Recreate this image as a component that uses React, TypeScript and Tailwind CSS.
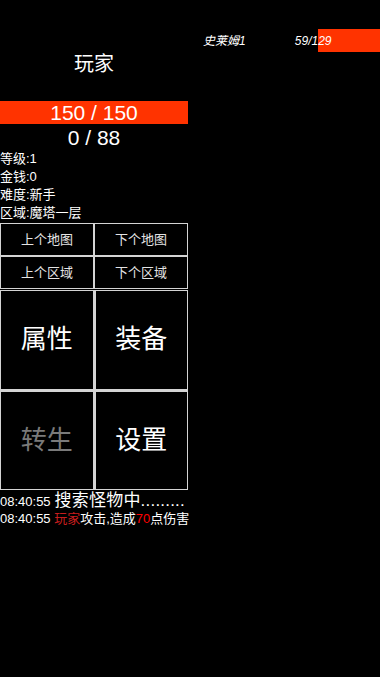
import React from 'react';

const FONT = { fontFamily: '"Liberation Sans", "Noto Sans CJK SC", sans-serif' };

function Cell({ label, big, dim }: { label: string; big?: boolean; dim?: boolean }) {
  return (
    <div
      className={
        'flex items-center justify-center bg-black ' +
        (big ? 'text-[26px] ' : 'text-[13px] ') +
        (dim ? 'text-[#7a7a7a]' : big ? 'text-white' : 'text-[#e4e4e4]')
      }
    >
      {label}
    </div>
  );
}

export default function App() {
  const stats = ['等级:1', '金钱:0', '难度:新手', '区域:魔塔一层'];

  return (
    <div className="flex h-[677px] w-[380px] bg-black text-white" style={FONT}>
      {/* player column */}
      <div className="flex w-[188px] shrink-0 flex-col">
        <div className="mt-[51px] text-center text-[20px] leading-[26px]">玩家</div>

        <div className="mt-[24px] flex h-[23px] items-center justify-center bg-[#ff3300] text-[21px] leading-none">
          150 / 150
        </div>
        <div className="flex h-[26px] items-center justify-center text-[21px] leading-none">0 / 88</div>

        <div className="flex flex-col text-[13px] leading-[18px]">
          {stats.map((s) => (
            <div key={s}>{s}</div>
          ))}
        </div>

        <div className="mt-[1px] grid h-[66px] grid-cols-2 grid-rows-2 gap-[2px] bg-[#d4d4d4] p-[1px]">
          <Cell label="上个地图" />
          <Cell label="下个地图" />
          <Cell label="上个区域" />
          <Cell label="下个区域" />
        </div>

        <div className="mt-[1px] grid h-[200px] grid-cols-2 grid-rows-2 gap-[3px] bg-[#d4d4d4] p-[1px]">
          <Cell label="属性" big />
          <Cell label="装备" big />
          <Cell label="转生" big dim />
          <Cell label="设置" big />
        </div>

        <div className="mt-[1px] w-[200px] whitespace-nowrap">
          <div className="flex items-baseline leading-[19px]">
            <span className="text-[13px]">08:40:55</span>
            <span className="ml-[4px] text-[17px] tracking-[0.2px]">搜索怪物中.........</span>
          </div>
          <div className="text-[13px] leading-[16px]">
            08:40:55 <span className="text-[#c81e1e]">玩家</span>攻击,造成
            <span className="text-[#ff0000]">70</span>点伤害
          </div>
        </div>
      </div>

      {/* monster column */}
      <div className="flex min-w-0 flex-1 flex-col">
        <div className="mt-[29px] flex h-[23px] items-center">
          <span className="ml-[15px] whitespace-nowrap text-[12px] italic">史莱姆1</span>
          <div className="relative ml-auto h-[23px] w-[135px] shrink-0">
            <div className="absolute right-[1px] top-0 h-[23px] w-[62px] bg-[#ff3300]" />
            <div className="relative flex h-full items-center justify-center text-[12px] italic">59/129</div>
          </div>
        </div>
      </div>
    </div>
  );
}
